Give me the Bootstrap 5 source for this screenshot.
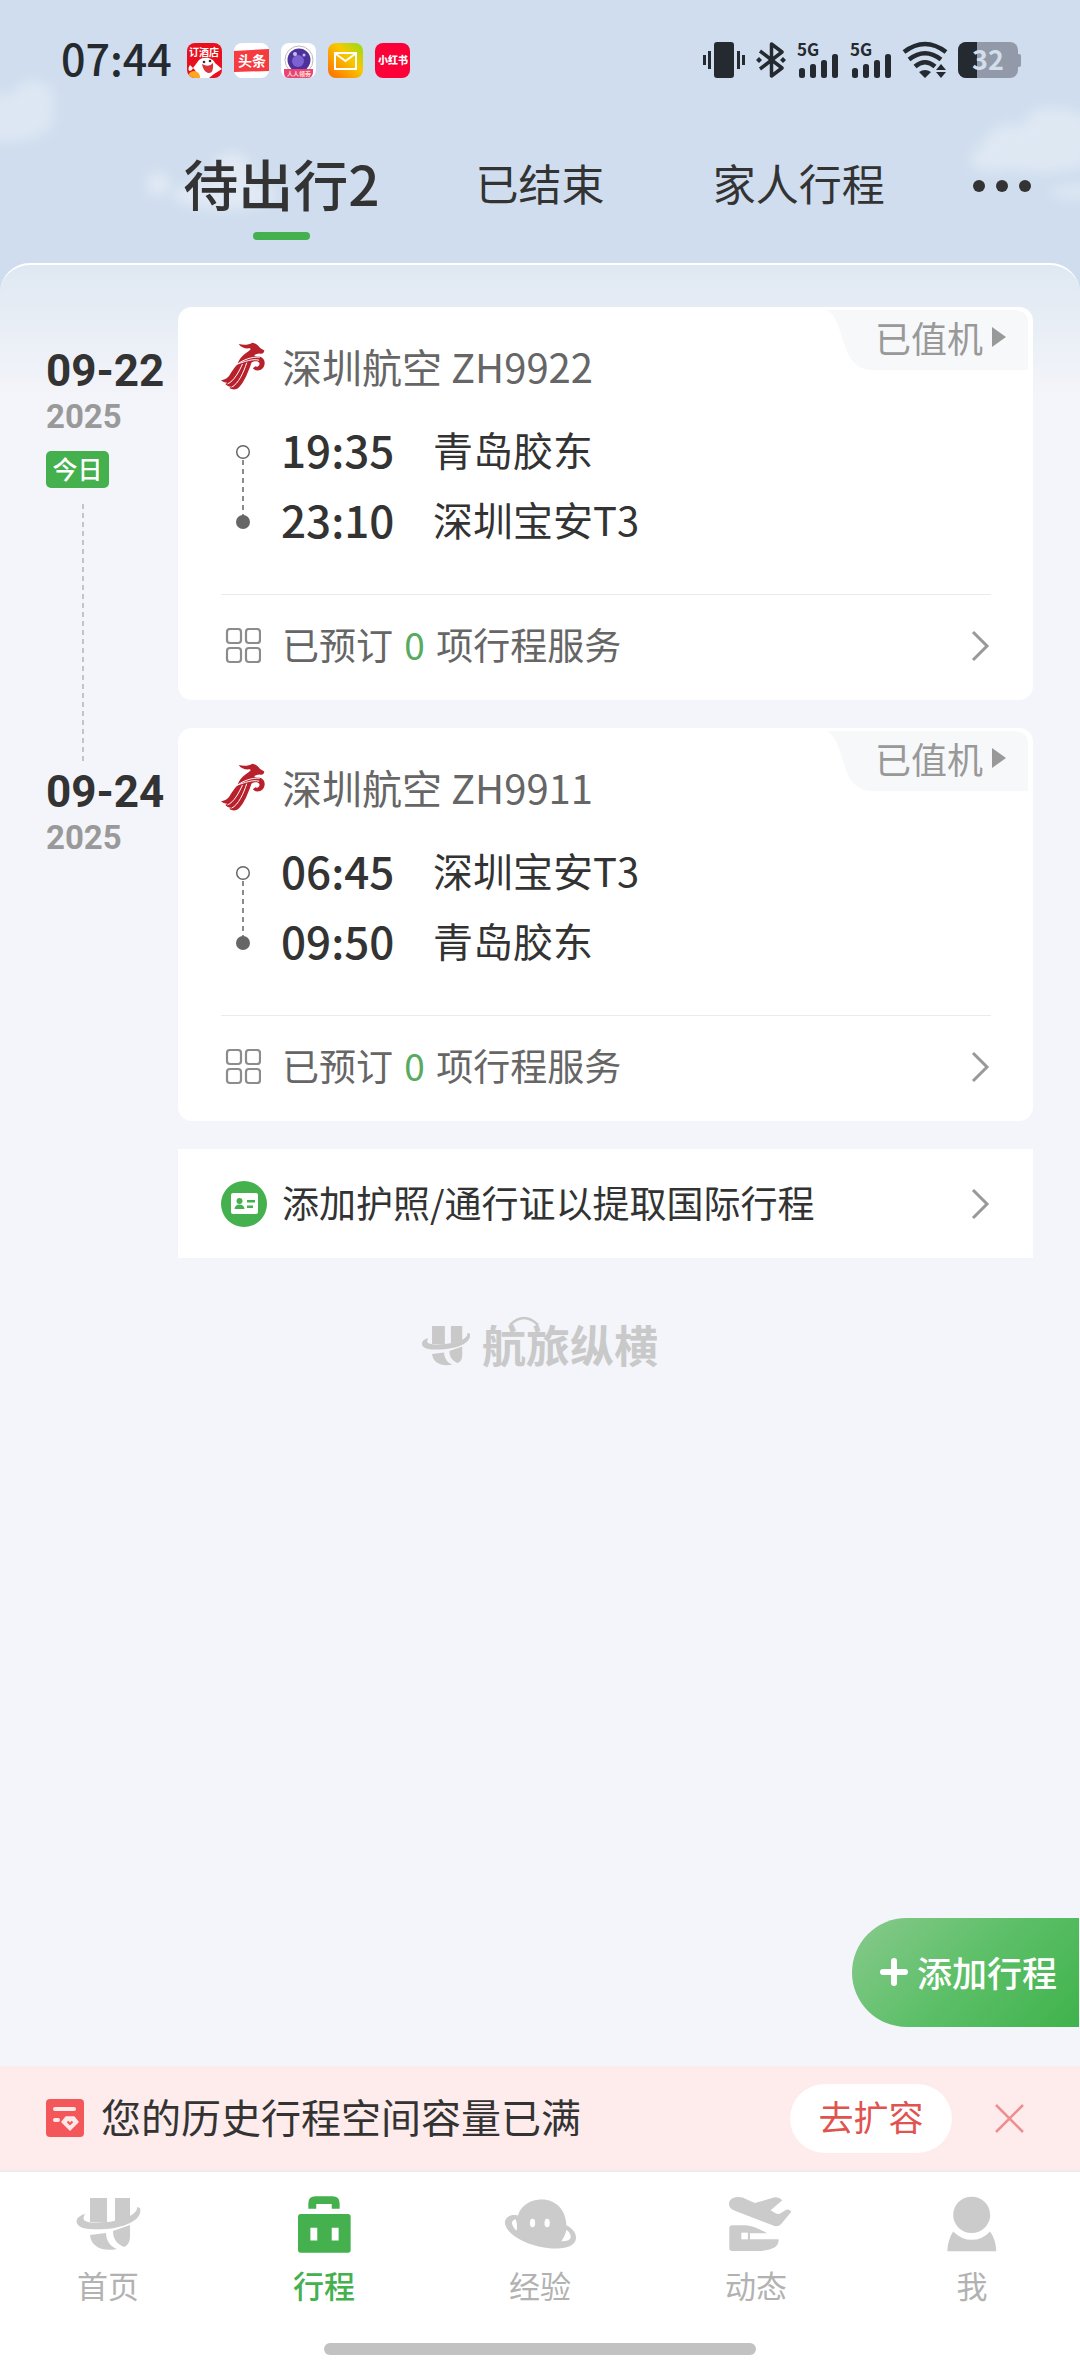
<!DOCTYPE html>
<html lang="zh-CN">
<head>
<meta charset="utf-8">
<meta name="viewport" content="width=device-width, initial-scale=1">
<title>行程</title>
<link href="https://cdn.jsdelivr.net/npm/bootstrap@5.3.0/dist/css/bootstrap.min.css" rel="stylesheet">
<style>
  :root { --green: #44b04e; --ink: #333; --muted: #666; --faint: #999; --page: #f4f5fa; }
  body { font-family: "Noto Sans CJK SC", "Noto Sans", sans-serif; color: var(--ink); background: #cfddee; }
  a { color: inherit; text-decoration: none; }
  .top-area { padding-top: 42px; background: #cfddee; }
  .clouds { left: 0; top: 0; width: 100%; height: 100%; pointer-events: none; }
  .status-row { height: 36px; padding: 0 59px 0 61px; }
  .clock { font-size: 43px; line-height: 36px; padding-bottom: 6px; font-weight: 500; color: #252a30; margin-right: 15px; }
  .app-icons { gap: 12px; }
  .sys-icons { gap: 11px; color: #252a30; }
  .sys-icons svg { overflow: visible; }
  .trip-tabs { display: grid; grid-template-columns: 1fr 1fr 1fr 148px; padding: 70px 4px 23px 152px; }
  .trip-tabs a { font-size: 43px; line-height: 68px; padding: 0; }
  .trip-tabs .current { font-size: 55px; font-weight: 500; }
  .more-btn { height: 76px; }
  .tab-line { width: 57px; height: 8px; border-radius: 4px; background: var(--green); margin: 16px auto 0; }
  .sheet { background: linear-gradient(#dfe8f2, #f4f5fa 134px); border-top: 2px solid #fff; border-radius: 30px 30px 0 0; padding: 42px 47px 39px 46px; }
  .trips { display: grid; gap: 28px; }
  .day-col { width: 132px; padding-top: 42px; }
  .day-date { font: 700 44px/44px Roboto, sans-serif; }
  .day-year { font: 700 33px/32px Roboto, sans-serif; color: var(--faint); margin-top: 8px; }
  .today-tag { width: 63px; height: 37px; border-radius: 5px; font-size: 25px; line-height: 35px; font-weight: 500; background: var(--green); color: #fff; margin-top: 18px; }
  .day-link { width: 2px; margin: 16px 0 -62px 36px; background: repeating-linear-gradient(#c4c4c4 0 5px, transparent 5px 9px); }
  .trip-card { background: #fff; border-radius: 14px; padding: 35px 42px 3px 43px; }
  .flight-head { font-size: 40px; line-height: 48px; color: var(--muted); gap: 17px; }
  .lead-box { width: 44px; }
  .route { margin: 26px 0 38px; gap: 16px; }
  .leg { line-height: 66px; padding-bottom: 4px; font-size: 40px; }
  .leg time { width: 152px; font-size: 44px; font-weight: 500; }
  .services { height: 103px; border-top: 1px solid #ebebeb; gap: 17px; font-size: 37px; line-height: 50px; color: var(--muted); }
  .services .svc-text { padding-bottom: 4px; }
  .services b { color: #58ab5e; font-weight: 400; margin: 0 3px; }
  .checkin { top: 3px; right: 5px; width: 201px; height: 60px; font-size: 36px; line-height: 50px; color: var(--faint); padding: 2px 22px 8px 0; gap: 9px; }
  .checkin .tag-bg { left: 0; top: 0; }
  .checkin span, .checkin .tri { position: relative; }
  .passport { margin: 28px 0 0 132px; height: 109px; background: #fff; padding: 0 42px 0 43px; gap: 15px; font-size: 37px; line-height: 50px; }
  .passport .pass-text { padding-bottom: 4px; }
  .brand { margin-top: 56px; color: #c9c9c9; font-size: 44px; line-height: 60px; gap: 11px; font-weight: 700; }
  .brand-text { padding-bottom: 4px; }
  .brand-arc { left: 27px; top: 2px; }
  .add-trip { right: 1px; bottom: 39px; width: 227px; height: 109px; border-radius: 55px 0 0 55px; color: #fff; font-size: 35px; line-height: 50px; font-weight: 500; gap: 9px; padding: 0 22px 2px 0; background: linear-gradient(135deg, #88ca8d, #5dbf68 50%, #3fb34c); }
  .full-notice { height: 104px; background: #feebeb; padding: 0 56px 0 46px; font-size: 40px; line-height: 56px; }
  .full-notice p { margin: 0 0 0 17px; padding-bottom: 5px; }
  .expand-btn { width: 162px; height: 69px; font-size: 35px; line-height: 50px; color: #df5350; padding: 0 0 5px; margin-right: 43px; }
  .expand-btn:hover { background: #fff; }
  .bottom-nav { background: #fff; border-top: 2px solid #eeecee; padding-bottom: 21px; }
  .bottom-nav a { color: #b2b2b2; font-size: 31px; line-height: 40px; padding: 24px 0 38px; gap: 13px; }
  .bottom-nav a.here { color: var(--green); font-weight: 500; }
  .nav-pic { height: 56px; color: #cbcbcb; }
  .here .nav-pic { color: var(--green); }
  .home-bar { width: 40%; height: 12px; border-radius: 6px; background: #c2c2c2; }
</style>
</head>
<body>
<svg width="0" height="0" class="position-absolute" aria-hidden="true">
  <defs>
    <symbol id="airline" viewBox="33 45 134 144">
      <g fill="#b8202c"><path d="M87 50C102 54 118 53 128 46C141 48 147 56 152 62L165 70C164 78 158 82 151 79C137 80 124 88 150 88C168 92 170 112 160 124C152 132 138 134 130 124L138 118C144 122 152 116 150 108C146 100 134 102 126 106C118 130 100 178 80 187C74 190 64 188 58 184L64 180C56 180 50 177 46 172L52 168C44 168 38 166 33 160C46 160 56 152 62 140C70 128 76 118 84 111C86 97 100 82 118 71C124 67 125 65 121 63C108 65 93 61 87 50Z"/></g>
      <g fill="none" stroke="#fff" stroke-linecap="round" stroke-width="3"><path d="M82 112C100 98 128 88 150 90"/><path d="M86 110C104 104 130 94 148 99"/><path d="M98 112C88 134 72 164 54 171"/><path d="M111 108C102 136 86 172 66 181"/></g>
    </symbol>
    <symbol id="mark" viewBox="0 0 65 53">
      <g fill="currentColor"><path d="M14 0H31V25L14 24ZM39 0H54V19L39 24Z"/><path d="M9 16C-3 19-3 30 14 31C38 33 68 25 64 10L61 9C62 16 50 21 38 23C28 25 12 26 8 22C7 20 8 18 9 16Z"/><path d="M14 37L30 35C30 43 35 49 41 51C27 54 15 49 14 37ZM37 33L54 27V38C54 44 52 47 48 49C41 46 37 41 37 33Z"/></g>
    </symbol>
    <symbol id="chev" viewBox="0 0 22 34"><path d="M4 3L18 17L4 31" fill="none" stroke="#999" stroke-width="3"/></symbol>
    <symbol id="grid4" viewBox="0 0 36 36"><g fill="none" stroke="#8c8c8c" stroke-width="2.200"><rect x="2" y="1" width="14" height="14" rx="3"/><rect x="21" y="1" width="14" height="14" rx="3"/><rect x="2" y="20" width="14" height="14" rx="3"/><rect x="21" y="20" width="14" height="14" rx="3"/></g></symbol>
    <symbol id="legs" viewBox="0 0 44 140"><path d="M22 44V100" stroke="#666" stroke-width="1.500" stroke-dasharray="5 4"/><circle cx="22" cy="36" r="6.300" fill="#fff" stroke="#666" stroke-width="1.500"/><circle cx="22" cy="106" r="7" fill="#666"/></symbol>
    <symbol id="tagshape" viewBox="0 0 201 60"><path d="M0 0H189Q201 2 201 12V60H46C28 60 22 48 18 36C13 22 10 5 0 0Z" fill="#f7f8f9"/></symbol>
    <symbol id="bars" viewBox="0 0 42 36"><g fill="#252a30"><rect x="2" y="26" width="6" height="10" rx="2.500"/><rect x="13" y="22" width="6" height="14" rx="2.500"/><rect x="24" y="18" width="6" height="18" rx="2.500"/><rect x="35" y="12" width="6" height="24" rx="2.500"/></g></symbol>
  </defs>
</svg>

<div class="d-flex flex-column min-vh-100">
  <header class="top-area position-relative">
    <svg class="clouds position-absolute" aria-hidden="true">
      <defs><filter id="soft" x="-30%" y="-30%" width="160%" height="160%"><feGaussianBlur stdDeviation="6"/></filter></defs>
      <g fill="#fff" opacity=".3" filter="url(#soft)"><circle cx="33" cy="102" r="22"/><ellipse cx="8" cy="118" rx="46" ry="24"/></g>
      <g fill="#fff" opacity=".36" filter="url(#soft)"><circle cx="232" cy="172" r="20"/><ellipse cx="225" cy="195" rx="52" ry="15"/><circle cx="158" cy="184" r="12"/></g>
      <svg x="100%" overflow="visible"><g fill="#fff" opacity=".32" filter="url(#soft)"><path d="M-112 160Q-100 145-92 135Q-80 118-58 126Q-50 104-30 108Q-10 106 10 118V165Q-30 178-70 170Q-100 178-112 160Z"/><ellipse cx="0" cy="192" rx="30" ry="7"/></g></svg>
    </svg>
    <div class="status-row d-flex align-items-center position-relative">
      <span class="clock">07:44</span>
      <div class="app-icons d-flex me-auto">
        <svg width="35" height="35" viewBox="0 0 35 35"><defs><clipPath id="rc"><rect width="35" height="35" rx="8"/></clipPath></defs><g clip-path="url(#rc)"><rect width="35" height="35" fill="#e8101c"/><path d="M3 22C-1 28 4 30 6 25L12 17C17 13 26 15 28 20L35 26L27 31L22 35H11L8 27Z" fill="#fff"/><path d="M15 21Q22 25 26 20Q27 31 21 30Q16 28 15 21Z" fill="#d9343a"/><circle cx="17" cy="19" r="1.300" fill="#333"/><circle cx="23" cy="18" r="1.300" fill="#333"/><circle cx="7" cy="34" r="6" fill="#fca721"/><text x="2" y="13" font-size="10" font-weight="700" fill="#fff">订酒店</text></g></svg>
        <svg width="35" height="35" viewBox="0 0 35 35"><rect width="35" height="35" rx="8" fill="#fff"/><path d="M0 8L35 6V28L0 29Z" fill="#f53b40"/><text x="4" y="23" font-size="14" font-weight="700" fill="#fff">头条</text></svg>
        <svg width="35" height="35" viewBox="0 0 35 35"><rect width="35" height="35" rx="8" fill="#fff"/><circle cx="18" cy="17" r="14" fill="none" stroke="#bbb"/><circle cx="18" cy="17" r="11.500" fill="#4c329a"/><circle cx="17" cy="18" r="6" fill="#7b62d0"/><circle cx="14" cy="11" r="2" fill="#c9bdf2"/><circle cx="23" cy="12" r="1.500" fill="#c9bdf2"/><path d="M3 26H32V30Q31 35 27 35H8Q3 35 3 30Z" fill="#ea4378"/><text x="6" y="33" font-size="6" font-weight="700" fill="#ffe2c8">人人领券</text></svg>
        <svg width="35" height="35" viewBox="0 0 35 35"><defs><linearGradient id="mailbg" x1="0" y1="1" x2="1" y2="0"><stop offset="0" stop-color="#ff6a00"/><stop offset=".6" stop-color="#f8c900"/><stop offset="1" stop-color="#8fdc16"/></linearGradient></defs><rect width="35" height="35" rx="8" fill="url(#mailbg)"/><path d="M7 10H28V26H7ZM8 11L17.500 18L27 11" fill="none" stroke="#fff" stroke-width="2"/></svg>
        <svg width="35" height="35" viewBox="0 0 35 35"><rect width="35" height="35" rx="8" fill="#fb0137"/><text x="3" y="21" font-size="10" font-weight="900" fill="#fff">小红书</text></svg>
      </div>
      <div class="sys-icons d-flex">
        <svg width="42" height="36" viewBox="0 0 42 36" fill="currentColor"><rect x="11" width="20" height="36" rx="3"/><rect y="13" width="3" height="10"/><rect x="5" y="9" width="3" height="18"/><rect x="34" y="9" width="3" height="18"/><rect x="39" y="13" width="3" height="10"/></svg>
        <svg width="30" height="36" viewBox="0 0 30 36"><path d="M4 9L26 26L15.500 34V2L26 10L4 27" fill="none" stroke="currentColor" stroke-width="3.500" stroke-linejoin="round"/><path d="M0 18L3 15L6 18L3 21ZM24 18L27 15L30 18L27 21Z" fill="currentColor"/></svg>
        <svg width="42" height="36"><use href="#bars"/><text y="14" font-size="17" font-weight="700" fill="currentColor">5G</text></svg>
        <svg width="42" height="36"><use href="#bars"/><text y="14" font-size="17" font-weight="700" fill="currentColor">5G</text></svg>
        <svg width="44" height="36" viewBox="0 0 44 36"><g fill="none" stroke="currentColor" stroke-width="4.500"><path d="M1 10Q22-6 43 10"/><path d="M6 17.500Q22 5 38 17.500"/><path d="M12 24.500Q22 16 32 24.500"/></g><path d="M16 30Q22 26 28 30L22 36ZM38 22L43 28H33ZM38 36L43 30H33Z" fill="currentColor"/></svg>
        <svg width="63" height="36" viewBox="0 0 63 36"><defs><clipPath id="bat"><rect width="60" height="36" rx="8"/></clipPath></defs><rect x="57" y="12" width="6" height="13" rx="2" fill="#9299a8"/><g clip-path="url(#bat)"><rect width="60" height="36" fill="#9299a8"/><rect width="19" height="36" fill="#252a30"/></g><text x="14" y="28" font-size="27" font-weight="700" fill="#d3deec">32</text></svg>
      </div>
    </div>
    <nav class="trip-tabs text-center position-relative">
      <div><a class="current d-block" href="#">待出行2</a><div class="tab-line"></div></div>
      <a href="#">已结束</a>
      <a href="#">家人行程</a>
      <button class="more-btn btn border-0 p-0 d-flex align-items-center justify-content-center" aria-label="更多"><svg width="58" height="12" viewBox="0 0 58 12" fill="#333"><circle cx="6" cy="6" r="6"/><circle cx="29" cy="6" r="6"/><circle cx="52" cy="6" r="6"/></svg></button>
    </nav>
  </header>

  <main class="sheet flex-grow-1 position-relative">
    <div class="trips">
      <section class="d-flex">
        <div class="day-col d-flex flex-column flex-shrink-0">
          <div class="day-date">09-22</div>
          <div class="day-year">2025</div>
          <div class="today-tag text-center">今日</div>
          <div class="day-link flex-grow-1"></div>
        </div>
        <article class="trip-card flex-grow-1 position-relative">
          <a href="#" class="checkin position-absolute d-flex align-items-center justify-content-end"><svg class="tag-bg position-absolute" width="201" height="60"><use href="#tagshape"/></svg><span>已值机</span><svg class="tri" width="14" height="20" viewBox="0 0 14 20"><path d="M0 0L14 10L0 20Z" fill="#999"/></svg></a>
          <div class="flight-head d-flex align-items-center"><svg width="44" height="48"><use href="#airline"/></svg><span>深圳航空 ZH9922</span></div>
          <div class="route d-flex"><svg width="44" height="140"><use href="#legs"/></svg>
            <div><div class="leg d-flex"><time>19:35</time><span>青岛胶东</span></div><div class="leg d-flex"><time>23:10</time><span>深圳宝安T3</span></div></div>
          </div>
          <a href="#" class="services d-flex align-items-center"><span class="lead-box d-flex justify-content-center"><svg width="36" height="36"><use href="#grid4"/></svg></span><span class="svc-text me-auto">已预订 <b>0</b> 项行程服务</span><svg width="22" height="34"><use href="#chev"/></svg></a>
        </article>
      </section>
      <section class="d-flex">
        <div class="day-col flex-shrink-0">
          <div class="day-date">09-24</div>
          <div class="day-year">2025</div>
        </div>
        <article class="trip-card flex-grow-1 position-relative">
          <a href="#" class="checkin position-absolute d-flex align-items-center justify-content-end"><svg class="tag-bg position-absolute" width="201" height="60"><use href="#tagshape"/></svg><span>已值机</span><svg class="tri" width="14" height="20" viewBox="0 0 14 20"><path d="M0 0L14 10L0 20Z" fill="#999"/></svg></a>
          <div class="flight-head d-flex align-items-center"><svg width="44" height="48"><use href="#airline"/></svg><span>深圳航空 ZH9911</span></div>
          <div class="route d-flex"><svg width="44" height="140"><use href="#legs"/></svg>
            <div><div class="leg d-flex"><time>06:45</time><span>深圳宝安T3</span></div><div class="leg d-flex"><time>09:50</time><span>青岛胶东</span></div></div>
          </div>
          <a href="#" class="services d-flex align-items-center"><span class="lead-box d-flex justify-content-center"><svg width="36" height="36"><use href="#grid4"/></svg></span><span class="svc-text me-auto">已预订 <b>0</b> 项行程服务</span><svg width="22" height="34"><use href="#chev"/></svg></a>
        </article>
      </section>
    </div>
    <a href="#" class="passport d-flex align-items-center">
      <svg width="46" height="46" viewBox="0 0 46 46"><circle cx="23" cy="23" r="23" fill="#44b04e"/><rect x="10" y="12" width="27" height="21" rx="2" fill="#fff"/><g fill="#44b04e"><circle cx="18.500" cy="20" r="3"/><path d="M13.500 28Q14 23.500 18.500 23.500Q23 23.500 23.500 28Z"/><path d="M26 19H34V21.500H26ZM26 24.500H32V27H26Z"/></g></svg>
      <span class="pass-text me-auto">添加护照/通行证以提取国际行程</span><svg width="22" height="34"><use href="#chev"/></svg>
    </a>
    <div class="brand d-flex align-items-center justify-content-center">
      <svg width="50" height="40"><use href="#mark"/></svg>
      <span class="brand-text position-relative">航旅纵横<svg class="brand-arc position-absolute" width="30" height="10" viewBox="0 0 30 10"><path d="M1 9Q15-5 29 9" fill="none" stroke="currentColor" stroke-width="2.500"/></svg></span>
    </div>
    <button class="add-trip position-absolute border-0 d-flex align-items-center justify-content-end"><svg width="28" height="28" viewBox="0 0 28 28"><path d="M14 3V25M3 14H25" stroke="#fff" stroke-width="6" stroke-linecap="round"/></svg>添加行程</button>
  </main>

  <footer>
    <div class="full-notice d-flex align-items-center">
      <svg width="38" height="38" viewBox="0 0 38 38"><rect width="38" height="38" rx="4" fill="#f4575a"/><g fill="#ffe9e8"><rect x="7" y="8" width="23" height="4" rx="2"/><rect x="7" y="19" width="7" height="4" rx="2"/><path d="M20 18H28L32 23L24 31L16 23Z" stroke="#ffe9e8" stroke-width="1.500" stroke-linejoin="round"/></g><path d="M21.500 22.500L24 25L26.500 22.500" fill="none" stroke="#f4575a" stroke-width="2"/></svg>
      <p class="me-auto">您的历史行程空间容量已满</p>
      <button class="expand-btn btn btn-light bg-white border-0 rounded-pill">去扩容</button>
      <button class="btn border-0 p-0 d-flex" aria-label="关闭"><svg width="29" height="29" viewBox="0 0 29 29"><path d="M1 1L28 28M28 1L1 28" stroke="#ee8e90" stroke-width="2.500"/></svg></button>
    </div>
    <div class="bottom-nav">
      <nav class="row g-0 text-center">
        <a href="#" class="col d-flex flex-column"><span class="nav-pic d-flex align-items-center justify-content-center"><svg width="65" height="53"><use href="#mark"/></svg></span>首页</a>
        <a href="#" class="col d-flex flex-column here" aria-current="page"><span class="nav-pic d-flex align-items-center justify-content-center"><svg width="53" height="57" viewBox="863 436 154 170" preserveAspectRatio="none"><path fill="currentColor" d="M893 474V458Q893 437 914 437H963Q984 437 984 458V474H961V460H916V474Z"/><rect x="863" y="490" width="153" height="115" rx="8" fill="currentColor"/><path fill="#fff" d="M899 531H919V569H899ZM961 531H981V569H961Z"/></svg></span>行程</a>
        <a href="#" class="col d-flex flex-column"><span class="nav-pic d-flex align-items-center justify-content-center"><svg width="73" height="50" viewBox="35 57 220 150"><path fill="currentColor" fill-rule="evenodd" d="M76 116C78 84 108 58 149 58C192 58 222 90 223 136C240 144 254 160 252 176C250 196 226 206 196 206C150 206 98 192 66 168C46 152 36 138 38 124C42 108 58 102 76 106ZM70 118C56 122 54 132 72 152C76 146 74 126 70 118ZM223 150C220 164 214 174 208 184C226 184 238 178 236 168C234 160 230 154 223 150Z"/><g fill="#fff"><ellipse cx="121" cy="129" rx="8" ry="13"/><ellipse cx="165" cy="129" rx="8" ry="13"/></g></svg></span>经验</a>
        <a href="#" class="col d-flex flex-column"><span class="nav-pic d-flex align-items-center justify-content-center"><svg width="72" height="56" viewBox="525 443 209 168" preserveAspectRatio="none"><g fill="currentColor"><path d="M568 487C545 480 545 452 570 447Q588 444 600 452L626 464L684 447Q694 444 706 456L672 486L686 495Q694 500 702 494L716 485Q724 480 732 490L702 528Q692 538 676 530Z"/><path d="M552 540Q552 531 561 531H600Q630 535 662 555H612V573H695Q698 605 640 608H561Q552 608 552 600Z"/></g><path fill="#fff" d="M587 553H606V573H587Z"/></svg></span>动态</a>
        <a href="#" class="col d-flex flex-column"><span class="nav-pic d-flex align-items-center justify-content-center"><svg width="50" height="56" viewBox="1182 438 146 166" preserveAspectRatio="none"><g fill="currentColor"><circle cx="1254" cy="494" r="54"/><path d="M1183 602Q1184 568 1200 543Q1225 568 1254 568Q1285 568 1308 543Q1325 568 1326 602Z"/></g></svg></span>我</a>
      </nav>
      <div class="home-bar mx-auto"></div>
    </div>
  </footer>
</div>
<script src="https://cdn.jsdelivr.net/npm/bootstrap@5.3.0/dist/js/bootstrap.bundle.min.js"></script>
</body>
</html>
